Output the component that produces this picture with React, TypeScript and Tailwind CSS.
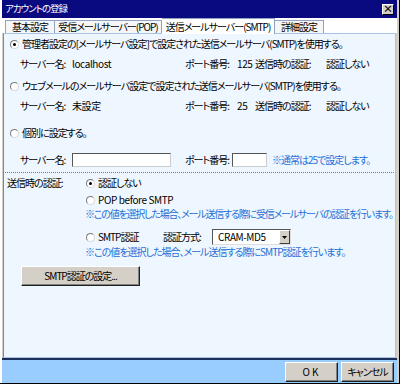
import React from "react";

const font = "font-['Noto_Sans_CJK_JP','Noto_Sans',sans-serif] [font-feature-settings:'palt']";

function Radio({ checked }: { checked?: boolean }) {
  return (
    <span className="relative inline-flex items-center justify-center w-[9px] h-[9px] rounded-full bg-white border border-t-[#7a7a7a] border-l-[#7a7a7a] border-b-[#d8d8d8] border-r-[#d8d8d8] shrink-0">
      {checked && <span className="w-[3px] h-[3px] rounded-full bg-black" />}
    </span>
  );
}

function InfoRow({ server, port }: { server: string; port: string }) {
  return (
    <div className="flex items-center h-[16px] mt-[4px] pl-[16px]">
      <span className="w-[52px] shrink-0">サーバー名:</span>
      <span className="w-[113px] shrink-0 tracking-[-0.4px]">{server}</span>
      <span className="w-[52px] shrink-0">ポート番号:</span>
      <span className="w-[18px] shrink-0 tracking-[-0.4px]">{port}</span>
      <span className="w-[71px] shrink-0">送信時の認証:</span>
      <span>認証しない</span>
    </div>
  );
}

function Btn({ children, className = "" }: { children: React.ReactNode; className?: string }) {
  return (
    <div className={`flex items-center justify-center bg-[#d4d0c8] border border-t-white border-l-white border-b-[#202020] border-r-[#202020] shadow-[inset_-1px_-1px_0_#808080] ${className}`}>
      {children}
    </div>
  );
}

export default function App() {
  return (
    <div className={`w-[400px] h-[384px] bg-[#d4d0c8] border-r border-b border-black flex flex-col text-[10px] leading-none tracking-[-1px] whitespace-nowrap text-black ${font}`}>
      <div className="flex flex-col flex-1 border-l-2 border-white border-r-2 border-r-[#d4d0c8]">
        {/* title */}
        <div className="h-[18px] bg-[#0a0a80] flex items-center justify-between pl-[3px] pr-[3px]">
          <span className="text-white text-[9.5px]">アカウントの登録</span>
          <span className="w-[12px] h-[11px] bg-[#d4d0c8] border border-t-white border-l-white border-b-black border-r-black flex items-center justify-center text-[10px] font-bold leading-none tracking-normal">×</span>
        </div>
        {/* tabs */}
        <div className="h-[15px] bg-white flex items-end pl-[3px] relative z-10">
          <div className="w-[50px] h-[13px] border border-[#8ea4c0] border-b-0 bg-[#f6f6f6] flex items-center justify-center">基本設定</div>
          <div className="w-[107px] h-[13px] border border-l-0 border-[#8ea4c0] border-b-0 bg-[#f6f6f6] flex items-center justify-center">受信メールサーバー(POP)</div>
          <div className="w-[113px] h-[16px] mb-[-1px] border border-l-0 border-[#8ea4c0] border-b-0 bg-white flex items-center justify-center">送信メールサーバー(SMTP)</div>
          <div className="w-[49px] h-[13px] border border-l-0 border-[#8ea4c0] border-b-0 bg-[#f6f6f6] flex items-center justify-center">詳細設定</div>
        </div>
        {/* panel */}
        <div className="flex-1 bg-[#eef6ff] border border-[#a7c4e6] border-l-[#6d8bb0] ml-[1px] mr-[1px] flex flex-col">
          <div className="flex items-center gap-[3px] h-[16px] mt-[2px] pl-[6px]">
            <Radio checked />
            <span>管理者設定の[メールサーバ設定]で設定された送信メールサーバ(SMTP)を使用する。</span>
          </div>
          <InfoRow server="localhost" port="125" />
          <div className="flex items-center gap-[3px] h-[16px] mt-[6px] pl-[6px]">
            <Radio />
            <span>ウェブメールのメールサーバ設定で設定された送信メールサーバ(SMTP)を使用する。</span>
          </div>
          <InfoRow server="未設定" port="25" />
          <div className="flex items-center gap-[3px] h-[16px] mt-[11px] pl-[6px]">
            <Radio />
            <span>個別に設定する。</span>
          </div>
          <div className="flex items-center h-[16px] mt-[11px] pl-[16px]">
            <span className="w-[52px] shrink-0">サーバー名:</span>
            <span className="w-[99px] h-[14px] shrink-0 bg-white border border-t-[#555] border-l-[#555] border-b-[#ccc] border-r-[#ccc]" />
            <span className="w-[14px] shrink-0" />
            <span className="w-[47px] shrink-0">ポート番号:</span>
            <span className="w-[35px] h-[14px] shrink-0 bg-white border border-t-[#555] border-l-[#555] border-b-[#ccc] border-r-[#ccc]" />
            <span className="ml-[5px] text-[#1f6fd6]">※通常は25で設定します。</span>
          </div>
          <div className="mt-[4px] mx-[1px] border-t border-dotted border-[#777]" />
          <div className="flex items-center h-[14px] mt-[3px] pl-[3px]">
            <span className="w-[79px] shrink-0">送信時の認証:</span>
            <Radio checked />
            <span className="ml-[3px]">認証しない</span>
          </div>
          <div className="flex items-center h-[14px] mt-[3px] pl-[82px]">
            <Radio />
            <span className="ml-[3px] tracking-[-0.4px]">POP before SMTP</span>
          </div>
          <div className="flex items-center h-[14px] pl-[81px] text-[#1f6fd6] tracking-[-1.2px]">
            ※この値を選択した場合、メール送信する際に受信メールサーバの認証を行います。
          </div>
          <div className="flex items-center h-[16px] mt-[8px] pl-[82px]">
            <Radio />
            <span className="ml-[3px] w-[65px] shrink-0">SMTP認証</span>
            <span className="w-[49px] shrink-0">認証方式:</span>
            <div className="w-[79px] h-[16px] bg-white border border-t-[#555] border-l-[#555] border-b-[#ddd] border-r-[#ddd] flex items-center justify-between">
              <span className="pl-[5px] tracking-[-0.4px]">CRAM-MD5</span>
              <span className="w-[11px] h-[14px] bg-[#d4d0c8] border border-t-white border-l-white border-b-[#404040] border-r-[#404040] flex items-center justify-center">
                <svg width="5" height="3" viewBox="0 0 5 3"><path d="M0 0H5L2.5 3Z" fill="#000" /></svg>
              </span>
            </div>
          </div>
          <div className="flex items-center h-[14px] pl-[81px] text-[#1f6fd6]">
            ※この値を選択した場合、メール送信する際にSMTP認証を行います。
          </div>
          <div className="pl-[17px] mt-[7px]">
            <Btn className="w-[119px] h-[20px]">SMTP認証の設定...</Btn>
          </div>
        </div>
        {/* bottom */}
        <div className="h-[25px] bg-[#99ccff] border-t-2 border-[#1c2f5a] flex items-center justify-end gap-[3px] pr-[3px]">
          <Btn className="w-[53px] h-[20px] tracking-[2px]">OK</Btn>
          <Btn className="w-[53px] h-[20px]">キャンセル</Btn>
        </div>
      </div>
    </div>
  );
}
